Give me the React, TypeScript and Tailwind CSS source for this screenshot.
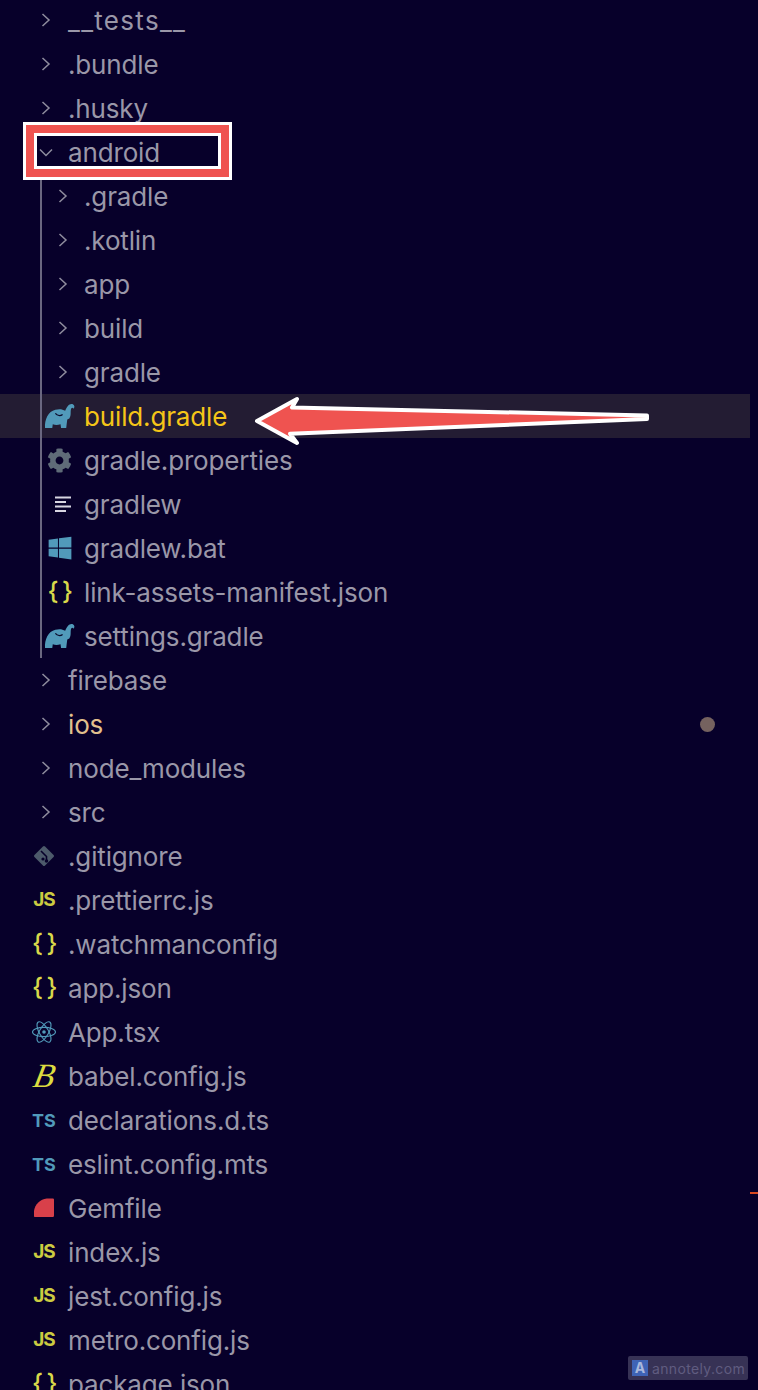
import { FaCog, FaWindows } from 'react-icons/fa';

type IconKind =
  | 'gradle'
  | 'gear'
  | 'lines'
  | 'windows'
  | 'json'
  | 'git'
  | 'js'
  | 'react'
  | 'babel'
  | 'ts'
  | 'gem';

type Item = {
  name: string;
  folder?: boolean;
  open?: boolean;
  icon?: IconKind;
  active?: boolean;
  modified?: boolean;
};

const GradleIcon = () => (
  <svg width="31" height="26" viewBox="0 0 30 25" className="text-[#519aba]">
    <path
      fill="currentColor"
      d="M1 24C0.5 16 4 8 11 6.5C15 5.5 18 6 20.5 7.5C22 3 25 0 27.5 1C29.8 2 30 4 28.5 5.5C27.5 4 26.5 4.5 26 6.5C25.5 9 26.5 12 24.5 15L22.5 16L21.5 24L16.5 24L16 20.5C13 21.5 11 21.5 8.5 20.5L8 24Z"
    />
    <path d="M11 10C13 12.5 16 12.5 18 11" fill="none" stroke="#0a0a2c" strokeWidth="1.2" />
  </svg>
);

const ReactIcon = () => (
  <svg width="26" height="26" viewBox="-13 -13 26 26" fill="none" stroke="#519aba" strokeWidth="1.1">
    <ellipse rx="11.5" ry="4.6" />
    <ellipse rx="11.5" ry="4.6" transform="rotate(60)" />
    <ellipse rx="11.5" ry="4.6" transform="rotate(120)" />
    <circle r="1.8" fill="#519aba" stroke="none" />
  </svg>
);

const LinesIcon = () => (
  <svg width="18" height="18" viewBox="0 0 18 18" fill="#d8d6e2" className="ml-[6px]">
    <rect x="1" y="1.5" width="16" height="2" />
    <rect x="1" y="6" width="11" height="2" />
    <rect x="1" y="10.5" width="16" height="2" />
    <rect x="1" y="15" width="11" height="2" />
  </svg>
);

const GitIcon = () => (
  <svg width="24" height="24" viewBox="0 0 24 24">
    <rect x="4.5" y="4.5" width="15" height="15" rx="1.5" fill="#4d5a6b" transform="rotate(45 12 12)" />
    <path d="M9 7L14.5 12.5V17" fill="none" stroke="#07002a" strokeWidth="1.6" />
    <circle cx="14.5" cy="17" r="1.8" fill="#07002a" />
    <circle cx="11" cy="15" r="1.6" fill="#07002a" />
  </svg>
);

const GemIcon = () => (
  <svg width="20" height="20" viewBox="0 0 22 22">
    <path fill="#d8404a" d="M1 21C0 21 0 20 0 19V14C1 7 7 1 14 0.5H20C21.5 0.5 22 1 22 2V19C22 20.5 21.5 21 20 21Z" />
  </svg>
);

const ClosedChevron = () => (
  <svg width="10" height="14" viewBox="0 0 10 14" fill="none" stroke="#8f8c9e" strokeWidth="1.5" className="ml-[4px]">
    <path d="M1.5 1L8 7L1.5 13" />
  </svg>
);

const OpenChevron = () => (
  <svg width="14" height="9" viewBox="0 0 14 9" fill="none" stroke="#8f8c9e" strokeWidth="1.5" className="ml-[4px]">
    <path d="M1 1.5L7 7.5L13 1.5" />
  </svg>
);

function FileIcon({ kind }: { kind: IconKind }) {
  switch (kind) {
    case 'gradle':
      return <GradleIcon />;
    case 'gear':
      return <FaCog className="h-[25px] w-[25px] text-[#5f6b78]" />;
    case 'lines':
      return <LinesIcon />;
    case 'windows':
      return <FaWindows className="h-[26px] w-[26px] text-[#519aba]" />;
    case 'json':
      return <span className="text-[25px] font-medium tracking-[-1.5px] text-[#d8d84a]">{'{ }'}</span>;
    case 'git':
      return <GitIcon />;
    case 'js':
      return <span className="text-[19px] font-bold tracking-[-1px] text-[#cbcb41]">JS</span>;
    case 'react':
      return <ReactIcon />;
    case 'babel':
      return <span className="-skew-x-12 font-['Liberation_Serif',serif] text-[34px] italic leading-none text-[#dcdc40]">B</span>;
    case 'ts':
      return <span className="text-[18px] font-bold text-[#519aba]">TS</span>;
    case 'gem':
      return <GemIcon />;
  }
}

function Row({ item, depth }: { item: Item; depth: number }) {
  return (
    <div
      className={`flex h-[44px] items-center ${depth === 1 ? 'pl-[41px]' : 'pl-[24px]'} ${
        item.active ? 'bg-[#231c33]' : ''
      }`}
    >
      <div className={`flex w-[40px] shrink-0 items-center justify-center ${depth === 1 && !item.folder ? 'pr-[3px]' : ''}`}>
        {item.folder ? item.open ? <OpenChevron /> : <ClosedChevron /> : item.icon && <FileIcon kind={item.icon} />}
      </div>
      <span
        className={`${depth === 1 ? 'ml-[3px]' : 'ml-[4px]'} whitespace-nowrap ${
          item.name === '__tests__' ? 'tracking-[1.3px]' : 'tracking-[-0.15px]'
        } ${item.active ? 'text-[#f5c518]' : item.modified ? 'text-[#e2c08d]' : 'text-[#9a97a8]'}`}
      >
        {item.name}
      </span>
      {item.modified && <span className="ml-auto mr-[35px] h-[15px] w-[15px] rounded-full bg-[#75625f]" />}
    </div>
  );
}

const before: Item[] = [
  { name: '__tests__', folder: true },
  { name: '.bundle', folder: true },
  { name: '.husky', folder: true },
  { name: 'android', folder: true, open: true },
];

const androidItems: Item[] = [
  { name: '.gradle', folder: true },
  { name: '.kotlin', folder: true },
  { name: 'app', folder: true },
  { name: 'build', folder: true },
  { name: 'gradle', folder: true },
  { name: 'build.gradle', icon: 'gradle', active: true },
  { name: 'gradle.properties', icon: 'gear' },
  { name: 'gradlew', icon: 'lines' },
  { name: 'gradlew.bat', icon: 'windows' },
  { name: 'link-assets-manifest.json', icon: 'json' },
  { name: 'settings.gradle', icon: 'gradle' },
];

const after: Item[] = [
  { name: 'firebase', folder: true },
  { name: 'ios', folder: true, modified: true },
  { name: 'node_modules', folder: true },
  { name: 'src', folder: true },
  { name: '.gitignore', icon: 'git' },
  { name: '.prettierrc.js', icon: 'js' },
  { name: '.watchmanconfig', icon: 'json' },
  { name: 'app.json', icon: 'json' },
  { name: 'App.tsx', icon: 'react' },
  { name: 'babel.config.js', icon: 'babel' },
  { name: 'declarations.d.ts', icon: 'ts' },
  { name: 'eslint.config.mts', icon: 'ts' },
  { name: 'Gemfile', icon: 'gem' },
  { name: 'index.js', icon: 'js' },
  { name: 'jest.config.js', icon: 'js' },
  { name: 'metro.config.js', icon: 'js' },
  { name: 'package.json', icon: 'json' },
];

export default function App() {
  return (
    <div className="relative h-[1390px] w-[758px] overflow-hidden bg-[#07002a] font-['Inter',sans-serif] text-[26px]">
      {/* Explorer tree */}
      <div className="mr-[8px] -mt-[2px]">
        {before.map((item) => (
          <Row key={item.name} item={item} depth={0} />
        ))}
        <div className="relative">
          {androidItems.map((item) => (
            <Row key={item.name} item={item} depth={1} />
          ))}
          <div className="absolute bottom-0 left-[40px] top-0 w-[2px] bg-[#6a6780]" />
        </div>
        {after.map((item) => (
          <Row key={item.name} item={item} depth={0} />
        ))}
      </div>

      {/* Annotation box round android */}
      <div className="absolute left-[23px] top-[122px] h-[58px] w-[209px] border-[3px] border-white">
        <div className="h-full w-full border-[8px] border-[#ef5350]">
          <div className="h-full w-full border-[3px] border-white" />
        </div>
      </div>

      {/* Annotation arrow */}
      <svg className="absolute left-0 top-0" width="758" height="460" viewBox="0 0 758 460">
        <polygon
          points="257,421 297,399 292,407.5 647,415.5 647,419 290,433.7 297,443"
          fill="#ef5350"
          stroke="#fff"
          strokeWidth="4"
          strokeLinejoin="round"
        />
      </svg>

      {/* Minimap tick */}
      <div className="absolute left-[750px] top-[1192px] h-[2px] w-[8px] bg-[#d9481f]" />

      {/* Watermark */}
      <div className="absolute left-[628px] top-[1356px] flex h-[24px] w-[120px] items-center gap-[4px] rounded-[2px] bg-[#373255] px-[4px]">
        <span className="flex h-[16px] w-[16px] shrink-0 items-center justify-center bg-[#3f63b5] text-[14px] font-bold leading-none text-[#aab8dc]">
          A
        </span>
        <span className="text-[14px] tracking-[0.35px] text-[#605c80]">annotely.com</span>
      </div>
    </div>
  );
}
